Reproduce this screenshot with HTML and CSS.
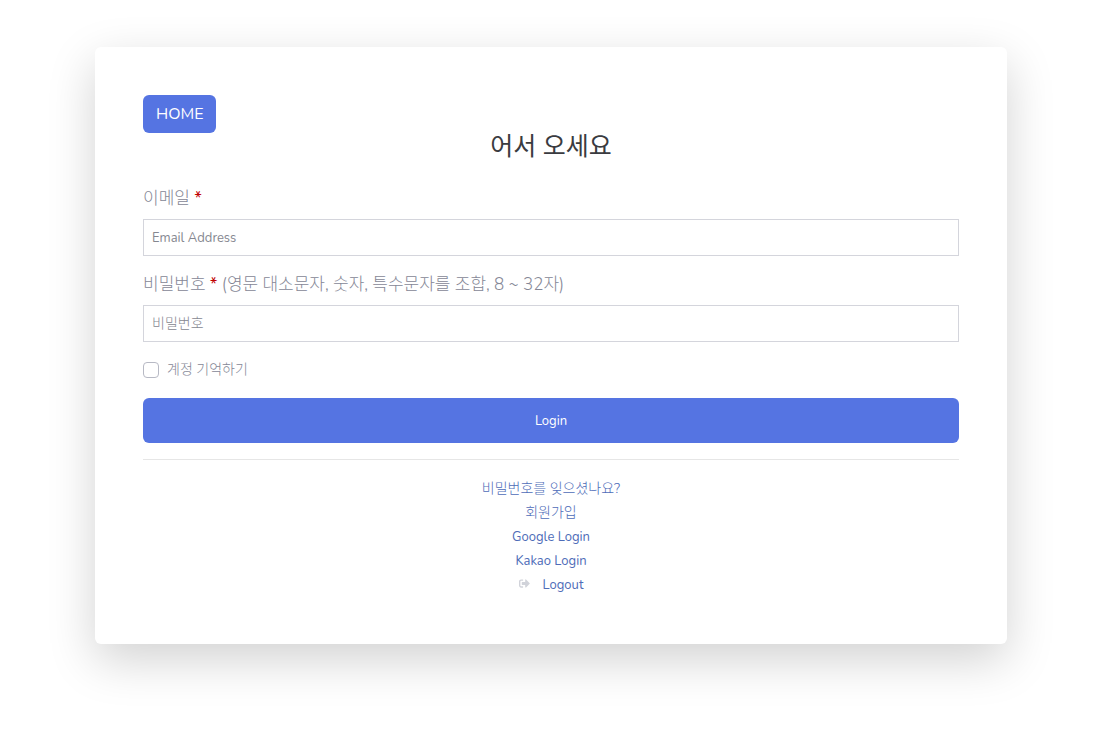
FILE: index.html
```html
<!DOCTYPE html>
<html lang="ko">
<head>
<meta charset="utf-8">
<meta name="viewport" content="width=device-width, initial-scale=1">
<title>Login</title>
<link rel="stylesheet" href="styles.css">
</head>
<body>
<main class="container">
  <section class="card">
    <a class="home" href="#">HOME</a>
    <h1 class="title">어서 오세요</h1>
    <form class="form">
      <div class="group">
        <label class="label" for="email">이메일 <span class="required">*</span></label>
        <input class="control" id="email" type="email" placeholder="Email Address">
      </div>
      <div class="group">
        <label class="label" for="password">비밀번호 <span class="required">*</span> (영문 대소문자, 숫자, 특수문자를 조합, 8 ~ 32자)</label>
        <input class="control korean" id="password" type="password" placeholder="비밀번호">
      </div>
      <div class="remember">
        <input class="check" id="remember" type="checkbox">
        <label class="korean" for="remember">계정 기억하기</label>
      </div>
      <button class="submit" type="submit">Login</button>
    </form>
    <hr class="rule">
    <nav class="links">
      <a class="korean" href="#">비밀번호를 잊으셨나요?</a>
      <a class="korean" href="#">회원가입</a>
      <a href="#">Google Login</a>
      <a href="#">Kakao Login</a>
      <a class="logout" href="#"><svg class="icon" viewBox="0 0 512 512" aria-hidden="true"><path d="M497 273L329 441c-15 15-41 4.500-41-17v-96H152c-13.300 0-24-10.700-24-24v-96c0-13.300 10.700-24 24-24h136V88c0-21.400 25.900-32 41-17l168 168c9.300 9.400 9.300 24.600 0 34zM192 436v-40c0-6.600-5.400-12-12-12H96c-17.700 0-32-14.300-32-32V160c0-17.700 14.300-32 32-32h84c6.600 0 12-5.400 12-12V76c0-6.600-5.400-12-12-12H96c-53 0-96 43-96 96v192c0 53 43 96 96 96h84c6.600 0 12-5.400 12-12z"/></svg>Logout</a>
    </nav>
  </section>
</main>
</body>
</html>
```

FILE: styles.css
```css
* { box-sizing: border-box; }

body {
  min-height: 100vh;
  margin: 0;
  background: #fff;
  color: #858796;
  font-family: Nunito, "Open Sans", "Noto Sans CJK KR", sans-serif;
  font-size: 16px;
  line-height: 24px;
}

.container {
  max-width: 960px;
  min-height: 100vh;
  margin: 0 auto;
  padding: 47px 24px;
}

.card {
  padding: 48px 48px 47px;
  border-radius: 6px;
  background: #fff;
  box-shadow: 0 16px 48px rgba(0, 0, 0, 0.18);
}

.home {
  display: inline-block;
  padding: 7px 13px;
  border-radius: 6px;
  background: #5574e2;
  color: #fff;
  text-decoration: none;
}

.title {
  margin: 0 0 24px;
  color: #3a3b40;
  font-size: 25px;
  font-weight: 400;
  line-height: 29px;
  text-align: center;
}

.group { margin-bottom: 16px; }

.label {
  display: block;
  margin-bottom: 8px;
  font-size: 17px;
  font-weight: 300;
  line-height: 25px;
}

.required {
  color: #c00000;
  font-weight: 400;
}

.control {
  display: block;
  width: 100%;
  height: 37px;
  padding: 8px;
  border: 1px solid #d4d5dc;
  background: #fff;
  color: #6e707e;
  font: inherit;
  font-size: 13px;
}

.control::placeholder { color: #858790; opacity: 1; }

.remember {
  display: flex;
  align-items: center;
  gap: 8px;
  margin-bottom: 16px;
  font-size: 13px;
}

.korean {
  font-size: 14px;
  font-weight: 300;
}

.check {
  appearance: none;
  width: 16px;
  height: 16px;
  margin: 0;
  border: 1px solid #b7b9c4;
  border-radius: 4px;
}

.submit {
  display: block;
  width: 100%;
  height: 45px;
  border: 0;
  border-radius: 6px;
  background: #5574e2;
  color: #fff;
  font: inherit;
  font-size: 13px;
}

.rule {
  margin: 16px 0 17px;
  border: 0;
  border-top: 1px solid #e6e6e6;
}

.links {
  display: flex;
  flex-direction: column;
  align-items: center;
  font-size: 13px;
}

.links a { color: #4e6cb8; text-decoration: none; }

.icon {
  width: 11px;
  height: 11px;
  margin-right: 13px;
  fill: #d1d3da;
}
```
